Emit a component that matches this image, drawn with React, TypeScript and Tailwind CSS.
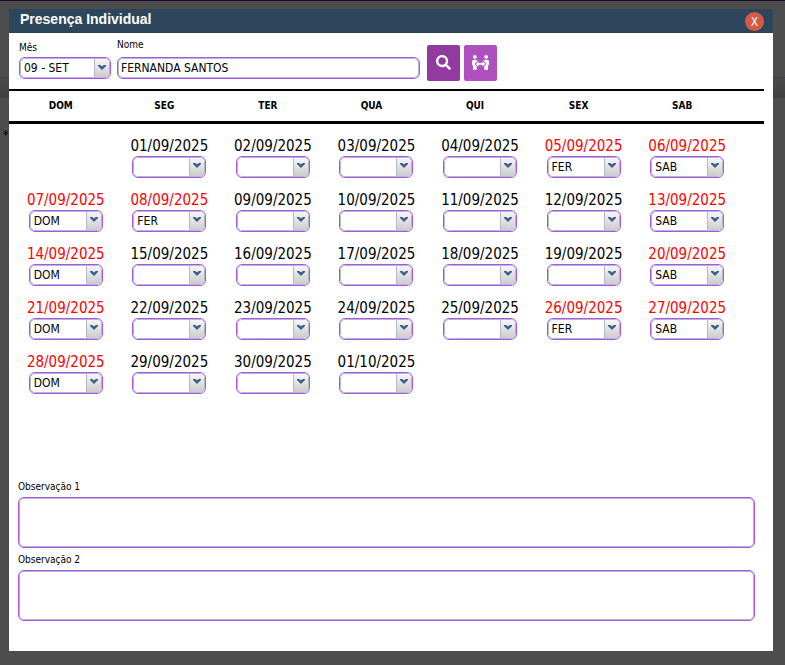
import React from 'react';
import { FaPeopleArrows, FaSearch } from 'react-icons/fa';

const MONTHS = ['JAN', 'FEV', 'MAR', 'ABR', 'MAI', 'JUN', 'JUL', 'AGO', 'SET', 'OUT', 'NOV', 'DEZ'];
const WEEKDAYS = ['DOM', 'SEG', 'TER', 'QUA', 'QUI', 'SEX', 'SAB'];
const STATUSES = ['', 'DOM', 'SAB', 'FER'];

interface Day {
  date: string;
  status: string;
}

const HOLIDAYS = [5, 8, 26];

// September 2025 starts on a Monday, the last cell is the first day of October
const buildWeeks = () => {
  const cells: (Day | null)[] = [null];
  for (let day = 1; day <= 31; day++) {
    const weekday = day % 7;
    let status = '';
    if (weekday === 0) status = 'DOM';
    if (weekday === 6) status = 'SAB';
    if (HOLIDAYS.includes(day)) status = 'FER';
    const date = day <= 30 ? `${String(day).padStart(2, '0')}/09/2025` : '01/10/2025';
    cells.push({ date, status });
  }
  while (cells.length % 7 !== 0) cells.push(null);

  const weeks: (Day | null)[][] = [];
  for (let i = 0; i < cells.length; i += 7) weeks.push(cells.slice(i, i + 7));
  return weeks;
};

interface ComboProps extends React.SelectHTMLAttributes<HTMLSelectElement> {
  wrapperClass: string;
}

const Combo: React.FC<ComboProps> = ({ wrapperClass, children, ...props }) => (
  <div
    className={`relative h-[22px] overflow-hidden rounded-md border border-[#a855f0] bg-white text-left ${wrapperClass}`}
  >
    <select
      {...props}
      className="block h-full w-full appearance-none rounded-[5px] border border-[#b5b8c8] bg-white pl-[3px] pr-4 text-xs leading-4 text-black outline-none"
    >
      {children}
    </select>
    <span className="pointer-events-none absolute inset-y-px right-px flex w-[15px] items-center justify-center rounded-r border-l border-[#b5b8c8] bg-linear-to-b from-[#f6f6f6] to-[#cccccc] pb-[2px]">
      <svg width="8" height="5" viewBox="0 0 8 5" fill="#3b5a92">
        <path d="M0 0h2.200L4 1.500 5.800 0H8v1L4 5 0 1z" />
      </svg>
    </span>
  </div>
);

const Observation: React.FC<{ id: string; label: string }> = ({ id, label }) => (
  <div className="mb-[6px]">
    <label htmlFor={id} className="block h-4 text-[10px] leading-3">
      {label}
    </label>
    <textarea
      id={id}
      className="block h-[51px] w-full resize-none rounded-md border border-[#a855f0] bg-white p-1 text-xs shadow-[inset_0_0_0_1px_#b5b8c8] outline-none"
    />
  </div>
);

const Calendar: React.FC = () => (
  <table className="w-full table-fixed border-collapse">
    <colgroup>
      {WEEKDAYS.map((name) => (
        <col key={name} />
      ))}
      <col className="w-[30px]" />
    </colgroup>
    <thead>
      <tr className="h-8 border-t-2 border-b-3 border-black">
        {WEEKDAYS.map((name) => (
          <th key={name} scope="col" className="p-0 text-center text-[10px] font-bold">
            {name}
          </th>
        ))}
        <td />
      </tr>
    </thead>
    <tbody>
      {buildWeeks().map((week, i) => (
        <tr key={i} className="h-[54px]">
          {week.map((day, j) => (
            <td key={j} className="p-0 pl-[10px] pt-3 align-top text-center">
              {day && (
                <>
                  <label
                    htmlFor={`day-${i}-${j}`}
                    className={`block text-[15px] leading-5 ${day.status ? 'text-[#ff0000]' : 'text-black'}`}
                  >
                    {day.date}
                  </label>
                  <Combo id={`day-${i}-${j}`} defaultValue={day.status} wrapperClass="mx-auto w-[74px]">
                    {STATUSES.map((status) => (
                      <option key={status} value={status}>
                        {status}
                      </option>
                    ))}
                  </Combo>
                </>
              )}
            </td>
          ))}
        </tr>
      ))}
    </tbody>
  </table>
);

const App: React.FC = () => {
  return (
    <div className="relative flex min-h-screen flex-col bg-[#4d4d4d] pt-2 pr-3 pb-[14px] pl-[9px] font-['DejaVu_Sans_Condensed','DejaVu_Sans',sans-serif] text-black border-t border-[#1f0a2c]">
      {/* dimmed page behind the dialog */}
      <div className="absolute inset-x-0 top-[76px] h-[21px] border-t border-[#34434f] bg-linear-to-b from-[#4a4a4a] to-[#404040]" />
      <span className="absolute top-[126px] left-[3px] text-xs leading-4">*</span>

      <div role="dialog" aria-labelledby="dialog-title" className="relative flex-1 bg-white">
        <header className="flex h-6 items-center justify-between bg-[#2e465b] pr-[9px] pl-[11px]">
          <h1
            id="dialog-title"
            className="pb-1 font-['Liberation_Sans',Arial,sans-serif] text-sm leading-5 font-bold text-white"
          >
            Presença Individual
          </h1>
          <button
            type="button"
            aria-label="Fechar"
            className="h-[19px] w-[19px] rounded-full bg-[#d45a45] text-xs leading-5 text-white"
          >
            X
          </button>
        </header>

        <form className="flex h-14 items-end gap-[6px] pb-2 pl-[10px]">
          <div className="pb-[2px]">
            <label htmlFor="month" className="block h-[17px] text-[10px] leading-4">
              Mês
            </label>
            <Combo id="month" defaultValue="09" wrapperClass="w-[92px]">
              {MONTHS.map((name, i) => {
                const value = String(i + 1).padStart(2, '0');
                return (
                  <option key={name} value={value}>
                    {value} - {name}
                  </option>
                );
              })}
            </Combo>
          </div>
          <div className="pb-[2px]">
            <label htmlFor="name" className="block h-5 text-[10px] leading-4">
              Nome
            </label>
            <input
              id="name"
              type="text"
              defaultValue="FERNANDA SANTOS"
              className="block h-[22px] w-[303px] rounded-md border border-[#a855f0] bg-white px-[3px] text-xs shadow-[inset_0_0_0_1px_#b5b8c8] outline-none"
            />
          </div>
          <div className="flex gap-1 pl-px">
            <button
              type="button"
              aria-label="Pesquisar"
              className="flex h-9 w-[33px] items-center justify-center rounded-xs bg-[#923a9f] pb-[2px] text-white"
            >
              <FaSearch size={15} />
            </button>
            <button
              type="button"
              aria-label="Reunião"
              className="flex h-9 w-[33px] items-center justify-center rounded-xs bg-[#ae51bf] pb-[2px] text-white"
            >
              <FaPeopleArrows size={17} />
            </button>
          </div>
        </form>

        <div className="pr-[9px]">
          <Calendar />
        </div>

        <div className="mt-[87px] pr-[18px] pb-6 pl-[9px]">
          <Observation id="obs-1" label="Observação 1" />
          <Observation id="obs-2" label="Observação 2" />
        </div>
      </div>
    </div>
  );
};

export default App;
